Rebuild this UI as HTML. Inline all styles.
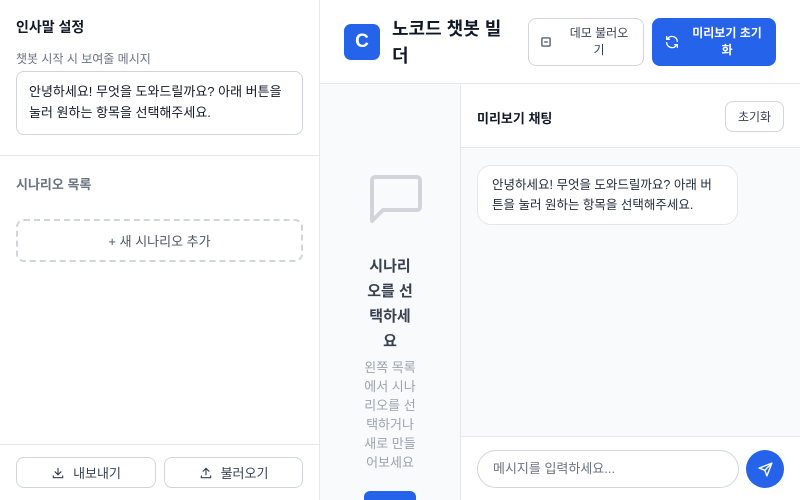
<!DOCTYPE html>
<html><head><meta charset="utf-8"><style>
*{box-sizing:border-box;margin:0;padding:0}
body{width:800px;height:500px;overflow:hidden;font-family:"Liberation Sans","Noto Sans CJK KR",sans-serif;background:#fff;position:relative;color:#111827}
.abs{position:absolute}
.side{left:0;top:0;width:320px;height:500px;border-right:1px solid #e5e7eb;background:#fff}
.btn{position:absolute;border:1px solid #d1d5db;border-radius:8px;background:#fff;font-size:13px;color:#374151;display:flex;align-items:center;justify-content:center;gap:8px}
</style></head><body>
<div class="abs side">
  <div class="abs" style="left:16px;top:17px;font-size:14px;font-weight:bold">인사말 설정</div>
  <div class="abs" style="left:16px;top:50px;font-size:12px;color:#6b7280">챗봇 시작 시 보여줄 메시지</div>
  <div class="abs" style="left:16px;top:71px;width:287px;height:64px;border:1px solid #d1d5db;border-radius:8px;padding:9px 12px;font-size:13px;line-height:21px;color:#111827">안녕하세요! 무엇을 도와드릴까요? 아래 버튼을 눌러 원하는 항목을 선택해주세요.</div>
  <div class="abs" style="left:0;top:155px;width:319px;border-top:1px solid #e5e7eb"></div>
  <div class="abs" style="left:16px;top:174px;font-size:13px;font-weight:bold;color:#6b7280">시나리오 목록</div>
  <div class="abs" style="left:16px;top:219px;width:287px;height:43px;border:2px dashed #d1d5db;border-radius:8px;font-size:13px;color:#4b5563;display:flex;align-items:center;justify-content:center">+ 새 시나리오 추가</div>
  <div class="abs" style="left:0;top:444px;width:319px;border-top:1px solid #e5e7eb"></div>
  <div class="btn" style="left:16px;top:457px;width:140px;height:31px"><svg width="14" height="14" viewBox="0 0 24 24" fill="none" stroke="#374151" stroke-width="2" stroke-linecap="round"><path d="M12 4v11M7 10l5 5 5-5M4 17v3h16v-3"/></svg>내보내기</div>
  <div class="btn" style="left:164px;top:457px;width:139px;height:31px"><svg width="14" height="14" viewBox="0 0 24 24" fill="none" stroke="#374151" stroke-width="2" stroke-linecap="round"><path d="M12 15V4M7 9l5-5 5 5M4 17v3h16v-3"/></svg>불러오기</div>
</div>
<div class="abs" style="left:320px;top:0;width:480px;height:84px;border-bottom:1px solid #e5e7eb;background:#fff">
  <div class="abs" style="left:24px;top:24px;width:36px;height:36px;border-radius:7px;background:#2563eb;color:#fff;font-weight:bold;font-size:19px;display:flex;align-items:center;justify-content:center">C</div>
  <div class="abs" style="left:72px;top:16px;width:110px;font-size:18px;font-weight:bold;line-height:27px">노코드 챗봇 빌더</div>
  <div class="btn" style="left:208px;top:18px;width:116px;height:48px;font-size:12px;gap:0;padding:0 10px"><svg width="14" height="14" viewBox="0 0 24 24" fill="none" stroke="#374151" stroke-width="2" style="flex:none;margin-right:12px"><rect x="5" y="5" width="14" height="14" rx="1"/><path d="M9 12h6"/></svg><span style="text-align:center;line-height:17px">데모 불러오기</span></div>
  <div class="abs" style="left:332px;top:18px;width:124px;height:48px;border-radius:8px;background:#2563eb;color:#fff;font-size:12px;font-weight:bold;display:flex;align-items:center;padding:0 12px"><svg width="16" height="16" viewBox="0 0 24 24" fill="none" stroke="#fff" stroke-width="2" stroke-linecap="round" style="flex:none;margin-right:10px"><path d="M20 11a8 8 0 0 0-14.5-4M4 4v4h4M4 13a8 8 0 0 0 14.5 4M20 20v-4h-4"/></svg><span style="text-align:center;line-height:17px">미리보기 초기화</span></div>
</div>
<div class="abs" style="left:320px;top:85px;width:141px;height:415px;background:#f9fafb;border-right:1px solid #e5e7eb;text-align:center;overflow:hidden">
  <svg class="abs" style="left:49px;top:89px" width="54" height="54" viewBox="0 0 54 54" fill="none" stroke="#d1d5db" stroke-width="4" stroke-linejoin="round"><path d="M3 6a3 3 0 0 1 3-3h42a3 3 0 0 1 3 3v27a3 3 0 0 1-3 3H14L3 47z"/></svg>
  <div class="abs" style="left:44px;top:169px;width:52px;font-size:15px;font-weight:bold;line-height:25px;color:#374151">시나리오를 선택하세요</div>
  <div class="abs" style="left:42px;top:273px;width:56px;font-size:13px;line-height:19px;color:#9ca3af">왼쪽 목록에서 시나리오를 선택하거나 새로 만들어보세요</div>
  <div class="abs" style="left:44px;top:406px;width:52px;height:20px;border-radius:6px;background:#2563eb"></div>
</div>
<div class="abs" style="left:461px;top:85px;width:339px;height:63px;background:#fff;border-bottom:1px solid #e5e7eb">
  <div class="abs" style="left:16px;top:23px;font-size:13px;font-weight:bold">미리보기 채팅</div>
  <div class="abs" style="left:264px;top:16px;width:59px;height:31px;border:1px solid #d1d5db;border-radius:8px;font-size:12px;color:#374151;display:flex;align-items:center;justify-content:center">초기화</div>
</div>
<div class="abs" style="left:461px;top:149px;width:339px;height:288px;background:#f9fafb;border-bottom:1px solid #e5e7eb">
  <div class="abs" style="left:16px;top:16px;width:261px;height:60px;background:#fff;border:1px solid #e5e7eb;border-radius:14px;padding:9px 14px;font-size:12.5px;line-height:20px;color:#1f2937">안녕하세요! 무엇을 도와드릴까요? 아래 버튼을 눌러 원하는 항목을 선택해주세요.</div>
</div>
<div class="abs" style="left:461px;top:438px;width:339px;height:62px;background:#fff">
  <div class="abs" style="left:16px;top:12px;width:262px;height:38px;border:1px solid #d1d5db;border-radius:19px;padding:0 15px;font-size:13px;color:#6b7280;line-height:36px">메시지를 입력하세요...</div>
  <div class="abs" style="left:285px;top:12px;width:38px;height:38px;border-radius:50%;background:#2563eb;display:flex;align-items:center;justify-content:center"><svg width="17" height="17" viewBox="0 0 24 24" fill="none" stroke="#fff" stroke-width="2" stroke-linejoin="round" stroke-linecap="round"><path d="M21 3L3 10l8 3 3 8zM21 3l-10 10"/></svg></div>
</div>
</body></html>
